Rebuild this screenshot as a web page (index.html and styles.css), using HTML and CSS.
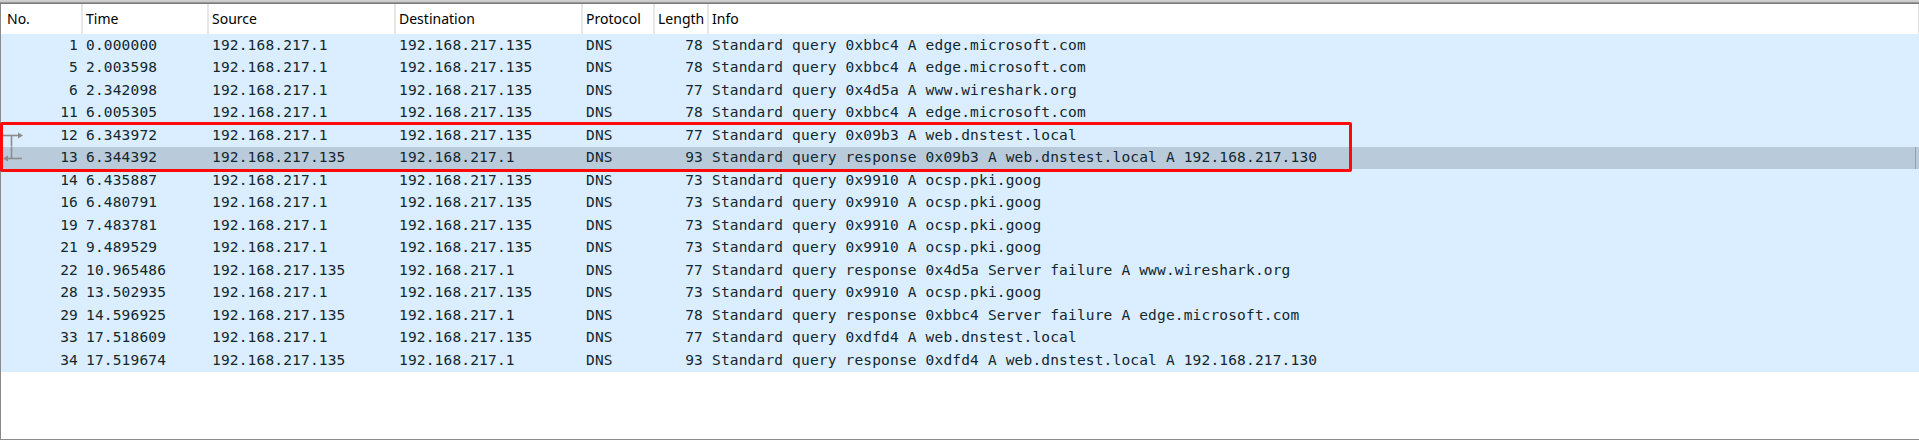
FILE: index.html
```html
<!DOCTYPE html>
<html>
<head>
<meta charset="utf-8">
<link rel="stylesheet" href="styles.css">
</head>
<body>
<div class="topbar"></div>
<div class="pane">
  <div class="header">
    <div class="hcell first">No.</div>
    <div class="hcell">Time</div>
    <div class="hcell">Source</div>
    <div class="hcell">Destination</div>
    <div class="hcell">Protocol</div>
    <div class="hcell">Length</div>
    <div class="hcell last">Info</div>
  </div>
  <div class="rows">
    <div class="row"><div class="c no">1</div><div class="c">0.000000</div><div class="c">192.168.217.1</div><div class="c">192.168.217.135</div><div class="c">DNS</div><div class="c len">78</div><div class="c">Standard query 0xbbc4 A edge.microsoft.com</div></div>
    <div class="row"><div class="c no">5</div><div class="c">2.003598</div><div class="c">192.168.217.1</div><div class="c">192.168.217.135</div><div class="c">DNS</div><div class="c len">78</div><div class="c">Standard query 0xbbc4 A edge.microsoft.com</div></div>
    <div class="row"><div class="c no">6</div><div class="c">2.342098</div><div class="c">192.168.217.1</div><div class="c">192.168.217.135</div><div class="c">DNS</div><div class="c len">77</div><div class="c">Standard query 0x4d5a A www.wireshark.org</div></div>
    <div class="row"><div class="c no">11</div><div class="c">6.005305</div><div class="c">192.168.217.1</div><div class="c">192.168.217.135</div><div class="c">DNS</div><div class="c len">78</div><div class="c">Standard query 0xbbc4 A edge.microsoft.com</div></div>
    <div class="row"><div class="c no"><svg class="rel" viewBox="0 0 24 22.5" width="24" height="22.5"><line x1="2" y1="11.5" x2="18" y2="11.5"/><line x1="10.5" y1="11.5" x2="10.5" y2="22.5"/><polygon points="17,8.5 22,11.5 17,14.5"/></svg><span>12</span></div><div class="c">6.343972</div><div class="c">192.168.217.1</div><div class="c">192.168.217.135</div><div class="c">DNS</div><div class="c len">77</div><div class="c">Standard query 0x09b3 A web.dnstest.local</div></div>
    <div class="row sel"><div class="c no"><svg class="rel" viewBox="0 0 24 22.5" width="24" height="22.5"><line x1="6" y1="11.5" x2="21" y2="11.5"/><line x1="10.5" y1="0" x2="10.5" y2="11.5"/><polygon points="7,8.5 2,11.5 7,14.5"/></svg><span>13</span></div><div class="c">6.344392</div><div class="c">192.168.217.135</div><div class="c">192.168.217.1</div><div class="c">DNS</div><div class="c len">93</div><div class="c">Standard query response 0x09b3 A web.dnstest.local A 192.168.217.130</div></div>
    <div class="row"><div class="c no">14</div><div class="c">6.435887</div><div class="c">192.168.217.1</div><div class="c">192.168.217.135</div><div class="c">DNS</div><div class="c len">73</div><div class="c">Standard query 0x9910 A ocsp.pki.goog</div></div>
    <div class="row"><div class="c no">16</div><div class="c">6.480791</div><div class="c">192.168.217.1</div><div class="c">192.168.217.135</div><div class="c">DNS</div><div class="c len">73</div><div class="c">Standard query 0x9910 A ocsp.pki.goog</div></div>
    <div class="row"><div class="c no">19</div><div class="c">7.483781</div><div class="c">192.168.217.1</div><div class="c">192.168.217.135</div><div class="c">DNS</div><div class="c len">73</div><div class="c">Standard query 0x9910 A ocsp.pki.goog</div></div>
    <div class="row"><div class="c no">21</div><div class="c">9.489529</div><div class="c">192.168.217.1</div><div class="c">192.168.217.135</div><div class="c">DNS</div><div class="c len">73</div><div class="c">Standard query 0x9910 A ocsp.pki.goog</div></div>
    <div class="row"><div class="c no">22</div><div class="c">10.965486</div><div class="c">192.168.217.135</div><div class="c">192.168.217.1</div><div class="c">DNS</div><div class="c len">77</div><div class="c">Standard query response 0x4d5a Server failure A www.wireshark.org</div></div>
    <div class="row"><div class="c no">28</div><div class="c">13.502935</div><div class="c">192.168.217.1</div><div class="c">192.168.217.135</div><div class="c">DNS</div><div class="c len">73</div><div class="c">Standard query 0x9910 A ocsp.pki.goog</div></div>
    <div class="row"><div class="c no">29</div><div class="c">14.596925</div><div class="c">192.168.217.135</div><div class="c">192.168.217.1</div><div class="c">DNS</div><div class="c len">78</div><div class="c">Standard query response 0xbbc4 Server failure A edge.microsoft.com</div></div>
    <div class="row"><div class="c no">33</div><div class="c">17.518609</div><div class="c">192.168.217.1</div><div class="c">192.168.217.135</div><div class="c">DNS</div><div class="c len">77</div><div class="c">Standard query 0xdfd4 A web.dnstest.local</div></div>
    <div class="row"><div class="c no">34</div><div class="c">17.519674</div><div class="c">192.168.217.135</div><div class="c">192.168.217.1</div><div class="c">DNS</div><div class="c len">93</div><div class="c">Standard query response 0xdfd4 A web.dnstest.local A 192.168.217.130</div></div>
    <div class="highlight"></div>
  </div>
</div>
</body>
</html>
```
FILE: styles.css
```css
* { box-sizing: border-box; }
html, body {
  margin: 0;
  padding: 0;
  width: 1919px;
  height: 440px;
  overflow: hidden;
  background: #ffffff;
}
.topbar {
  height: 4px;
  background: linear-gradient(to bottom, #d4d4d4 0px, #c4c4c4 2px, #9a9a9a 2px, #9a9a9a 3px, #7a7a7a 3px, #7a7a7a 4px);
}
.pane {
  height: 436px;
  border-left: 1px solid #8a8a8a;
  border-bottom: 1px solid #8a8a8a;
  background: #ffffff;
}
.header {
  display: grid;
  grid-template-columns: 81px 126px 187px 187px 72px 54px 1fr;
  height: 30px;
  background: #ffffff;
  font-family: "Noto Sans", "Open Sans", sans-serif;
  font-size: 14px;
  color: #000000;
}
.hcell {
  display: flex;
  align-items: center;
  padding-left: 3px;
  border-left: 2px solid #e6e6e6;
  margin-left: -1px;
  white-space: nowrap;
  overflow: hidden;
  padding-bottom: 1px;
}
.hcell.first {
  border-left: none;
  margin-left: 0;
  padding-left: 6px;
}
.hcell.last {
  border-right: 1px solid #e0e0e0;
}
.rows {
  position: relative;
}
.row {
  display: grid;
  grid-template-columns: 81px 126px 187px 187px 72px 54px 1fr;
  height: 22.5px;
  background: #daeeff;
  font-family: "DejaVu Sans Mono", "Liberation Mono", monospace;
  font-size: 14.5px;
  letter-spacing: 0.17px;
  color: #12272e;
}
.row.sel {
  background: #b9cbdb;
  box-shadow: inset -3px 0 0 #b9cbdb, inset -4px 0 0 #8fa2b3;
}
.c {
  display: flex;
  align-items: center;
  padding-left: 4px;
  white-space: pre;
  overflow: hidden;
  padding-bottom: 1px;
}
.c.no {
  justify-content: flex-end;
  padding-left: 0;
  padding-right: 4px;
  position: relative;
}
.c.len {
  justify-content: flex-end;
  padding-left: 0;
  padding-right: 5px;
}
.rel {
  position: absolute;
  left: 0;
  top: 0;
}
.rel line {
  stroke: #8c8c8c;
  stroke-width: 1.6;
}
.rel polygon {
  fill: #8c8c8c;
}
.highlight {
  position: absolute;
  left: -1px;
  top: 88px;
  width: 1352px;
  height: 50px;
  border: 3px solid #ff0a0a;
  border-radius: 2px;
  pointer-events: none;
}
```
